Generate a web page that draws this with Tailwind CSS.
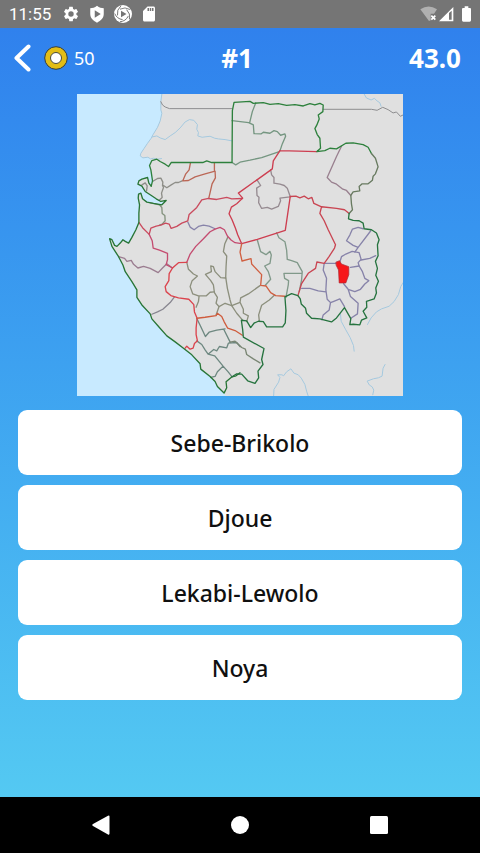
<!DOCTYPE html>
<html lang="en">
<head>
  <meta charset="UTF-8">
  <meta name="viewport" content="width=device-width, initial-scale=1.0">
  <title>Map Quiz</title>
  <script src="https://cdn.jsdelivr.net/npm/@tailwindcss/browser@4"></script>
</head>
<body class="min-h-screen flex flex-col bg-black font-['Noto_Sans','Open_Sans',sans-serif]">

  <!-- Status bar -->
  <div class="h-7 shrink-0 flex items-center justify-between bg-[#757575] text-white pl-[9px] pr-2">
    <div class="flex items-center">
      <span class="w-[53px] text-[17px] leading-7 font-['Roboto',sans-serif]">11:55</span>
      <svg class="size-[18px]" viewBox="0 0 24 24" fill="currentColor" aria-hidden="true">
        <path d="M19.14 12.94c.04-.3.06-.61.06-.94s-.02-.64-.07-.94l2.03-1.58a.49.49 0 0 0 .12-.61l-1.92-3.32a.49.49 0 0 0-.59-.22l-2.39.96a7 7 0 0 0-1.62-.94l-.36-2.54a.48.48 0 0 0-.48-.41h-3.84c-.24 0-.43.17-.47.41l-.36 2.54c-.59.24-1.13.57-1.62.94l-2.39-.96a.48.48 0 0 0-.59.22L2.74 8.87c-.12.21-.08.47.12.61l2.03 1.58a7.3 7.3 0 0 0 0 1.88l-2.03 1.58a.49.49 0 0 0-.12.61l1.92 3.32c.12.22.37.29.59.22l2.39-.96c.5.38 1.03.7 1.62.94l.36 2.54c.05.24.24.41.48.41h3.84c.24 0 .44-.17.47-.41l.36-2.54c.59-.24 1.13-.56 1.62-.94l2.39.96c.22.08.47 0 .59-.22l1.92-3.32a.48.48 0 0 0-.12-.61zM12 15.6a3.6 3.6 0 1 1 0-7.2 3.6 3.6 0 0 1 0 7.2z"/>
      </svg>
      <svg class="ml-2 size-[18px]" viewBox="0 0 24 24" fill="currentColor" aria-hidden="true">
        <path fill-rule="evenodd" d="M12 1C9 3.4 6 4.2 3 4.4V12c0 5 3.6 9 9 11.500C17.400 21 21 17 21 12V4.400C18 4.200 15 3.400 12 1zM9 7l8 5-8 5z"/>
      </svg>
      <svg class="ml-2 size-[18px]" viewBox="0 0 18 18" aria-hidden="true">
        <circle cx="9" cy="9" r="9" fill="#fff"/>
        <g fill="none" stroke="#757575" stroke-width=".9">
          <path d="M6 4.200Q11 1.500 16 4.500"/>
          <path d="M6 4.200Q11 1.500 16 4.500" transform="rotate(72 9 9)"/>
          <path d="M6 4.200Q11 1.500 16 4.500" transform="rotate(144 9 9)"/>
          <path d="M6 4.200Q11 1.500 16 4.500" transform="rotate(216 9 9)"/>
          <path d="M6 4.200Q11 1.500 16 4.500" transform="rotate(288 9 9)"/>
        </g>
        <path d="M7 5.800v6.400l5.500-3.200z" fill="#757575"/>
      </svg>
      <svg class="ml-2 size-[18px]" viewBox="0 0 24 24" fill="currentColor" aria-hidden="true">
        <path d="M18 2h-8L4 8v12c0 1.100.9 2 2 2h12c1.100 0 2-.9 2-2V4c0-1.100-.9-2-2-2zm-6 6h-2V4h2v4zm3 0h-2V4h2v4zm3 0h-2V4h2v4z"/>
      </svg>
    </div>
    <div class="flex items-center">
      <!-- Wi-Fi without internet -->
      <svg class="w-[18px] h-4" viewBox="0 0 54 48" aria-hidden="true">
        <path d="M1 10Q26-7 51 10L42 23H32v20L27 45z" fill="#b0b0b0"/>
        <path d="M34 29l12 12m0-12L34 41" stroke="#fff" stroke-width="5"/>
      </svg>
      <svg class="ml-px w-[15px] h-4" viewBox="0 0 45 48" aria-hidden="true">
        <path fill-rule="evenodd" d="M0 46L43 3v43zM30 21v20h8V14z" fill="#fff"/>
      </svg>
      <svg class="ml-[7px] w-[11px] h-4" viewBox="0 0 33 48" fill="#fff" aria-hidden="true">
        <path d="M11 1h11v5h5q3 0 3 3v34q0 4-4 4H7q-4 0-4-4V9q0-3 3-3h5z"/>
      </svg>
    </div>
  </div>

  <main class="flex-1 flex flex-col bg-linear-to-b from-[#3081ed] to-[#54c9f2] pb-4">
    <!-- Header -->
    <header class="h-15 grid grid-cols-3 items-center pl-[13px] pr-[19px] text-white">
      <div class="flex items-center">
        <button type="button" aria-label="Back" class="w-[18px]">
          <svg class="w-[18px] h-7" viewBox="0 0 18 28" fill="none" stroke="#fff" stroke-width="4" stroke-linecap="round" stroke-linejoin="round">
            <path d="M15.500 2.500L3.500 14l12 11.500"/>
          </svg>
        </button>
        <svg class="ml-[13px] size-6" viewBox="0 0 24 24" aria-hidden="true">
          <circle cx="12" cy="12" r="11.300" fill="#e2bd16" stroke="#303c45" stroke-width="1"/>
          <circle cx="12" cy="12" r="5.500" fill="#fff" stroke="#4a4b3c" stroke-width="1"/>
        </svg>
        <span class="ml-[6px] text-[18px] leading-6">50</span>
      </div>
      <h1 class="text-center text-[26px] leading-8 font-bold">#1</h1>
      <div class="text-right text-[26px] leading-8 font-bold">43.0</div>
    </header>

    <!-- Map -->
    <svg class="mt-[6px] w-[68%] mx-auto shrink-0" viewBox="20 17 981 909" role="img" aria-label="Map of Gabon with one department highlighted" fill="none" stroke-width="4" stroke-linejoin="round" stroke-linecap="round">
      <rect x="20" y="17" width="981" height="909" fill="#c8eaff"/>
      <path fill="#e0e0e0" d="M275 15L272 40V65L275 75 270 98 262 117 248 140 243 150 232 165 222 180 212 195 210 203 218 209 233 207 241 212 242 218 238 232 242 245 246 262 247 280 243 294 236 285 232 268 215 273 206 278 203 288 215 294 225 310 240 320 258 332 272 340 288 337 275 350 250 346 230 342 217 332 212 315 205 318 204 330 208 350 206 375V403L197 425 185 448 175 465 165 460 158 455 150 465 140 475 133 472 125 455 118 452 125 475 145 506 158 531 165 551 185 581 200 606V628L215 651 240 678 245 693 265 716 290 744 315 762 340 781 365 801 390 828 392 844 420 866 435 881 442 896 462 916 470 930H1003V15z"/>

      <!-- rivers -->
      <g stroke="#a5c9df" stroke-width="3">
        <path d="M275 17L272 40V65L275 75 270 98 262 117 248 140 243 150 232 165 222 180 212 195 210 203 218 209 233 207 241 212 250 210 262 213 274 211"/>
        <path d="M246 146L260 143 270 149 285 154 300 143 315 133 330 119 345 101 358 94 371 96 382 109 380 123 385 133 383 143 396 147 420 144 434 150 445 152 465 154 486 158"/>
        <path d="M883 17L890 29 904 35 914 30 922 38 930 43 934 54"/>
        <path d="M1001 583L993 596 986 620 973 641 958 655 935 663 920 672 904 690 893 710"/>
        <path d="M812 678L814 700 828 726 841 749 851 773 853 790"/>
        <path d="M611 925L612 905 626 883 630 869 623 861 636 861 641 864 650 852 663 843 672 856 685 861 694 871 705 890 710 910 715 925"/>
        <path d="M946 830L940 841 937 865 926 870 911 873 892 880 899 892 907 897 912 907 909 921"/>
      </g>

      <!-- neighbouring countries -->
      <path stroke="#8d8d8f" stroke-width="3" d="M272 40L277 50 285 56 298 61H486M760 63H905L922 66 939 57 955 64 970 74 980 71 992 84 1000 80"/>

      <!-- department borders -->
      <g stroke="#8e8e88">
        <path d="M247 280L262 271 272 270 278 282 277 292 280 298 274 315 276 328 267 336M280 292L290 299 302 291 315 283 325 283 336 278"/>
        <path d="M215 290L225 284 231 293 229 308"/>
        <path stroke="#82917c" d="M240 344L268 350 275 358 276 376 284 382 285 398 276 408 268 411"/>
        <path stroke="#759681" d="M486 97L536 103 550 110 552 136 573 137 580 132 600 135 612 127 622 130 632 141 645 137 647 144 637 167 630 188M557 44L547 70 539 103"/>
        <path stroke="#759681" d="M486 223L497 230 510 222 540 216 575 208 628 190"/>
        <path stroke="#968b91" d="M602 245L605 260 612 268 612 285 630 288 643 292 652 300 660 323M561 275L572 292 560 300 561 322 567 327 566 344 575 361 592 358 605 363 625 355 632 338 630 330 660 326"/>
        <path stroke="#99808f" d="M815 174L800 205 772 268 785 282 800 288 819 303 830 307 843 322"/>
        <path stroke="#6e8881" d="M380 692L390 712 406 746 417 733 440 727 465 723M461 724L480 762M380 759L395 770 405 786 414 799 431 785 440 789 448 776 470 780 475 766 500 764 510 776M414 799L434 804 459 835 475 853 486 867M459 835L442 852 435 866 422 869"/>
      </g>

      <!-- central departments -->
      <g stroke="#8c8f7d" transform="translate(330 396)">
        <path d="M143 52L134 72 130 95 140 108 138 140 137 172 142 205 150 240 155 257 170 280 187 300"/>
        <path d="M137 174L122 173 105 155 100 140 92 138 94 155 76 163 92 182 100 195 103 218 112 232 108 250 117 260"/>
        <path d="M20 127L25 148 40 162 52 168 36 182 30 200 38 222 55 228 78 228 90 217 102 216M57 228L55 245 48 262"/>
        <path d="M108 285L117 260 135 250 155 257 180 247 182 234 205 222 240 197M180 247L190 268 190 280 205 288 200 305"/>
        <path d="M284 225L268 240 245 256 236 285 238 303"/>
        <path stroke="#81998a" d="M232 60L242 95 258 104 270 94 274 105 270 130 254 138 265 155 272 178 256 196"/>
        <path stroke="#81998a" d="M290 38L297 53 315 65 320 90 322 118 335 122 352 128 367 155 365 180 358 215M367 160H312L314 175 326 182 325 195 318 232"/>
      </g>

      <!-- western departments -->
      <path stroke="#8783a9" d="M353 402L360 417 372 425 385 415 400 411 417 414 435 422"/>
      <path stroke="#9b7d90" d="M145 506L163 511 170 520 183 517 190 529 203 540 220 535 240 541 264 554 277 540 290 527 306 539"/>
      <path stroke="#888690" d="M245 679L262 672 278 664 300 644 313 627"/>

      <!-- eastern departments -->
      <g stroke="#8783a9" transform="translate(660 366)">
        <path d="M103 160H144M150 156L155 140 168 132 187 124 208 128 214 148 205 158 208 168 182 172"/>
        <path d="M220 56L205 52 188 57 180 75 170 92 190 106 205 112 243 62M205 112L195 126M214 150L240 145 258 137"/>
        <path d="M208 168L218 185 225 205 237 212 225 222 212 238 195 245 175 238 162 222 160 216M175 238L182 260 205 280 203 312 183 325"/>
        <path d="M103 160L100 180 110 205 108 240 112 268 122 278 130 275 150 267 164 290M108 246L85 243 60 235 35 235M122 278L118 300 100 315 96 330"/>
      </g>

      <!-- province borders -->
      <g stroke="#ca4b5e">
        <path stroke="#bb6756" d="M361 224L357 245 347 257 338 278 355 277 375 266 405 257 435 249 436 269 426 287 416 331M433 224V249"/>
        <path d="M206 403L217 419 237 439 242 420 258 414 272 411 286 405 297 408 303 421 320 415 335 405 353 398 357 379 380 358 395 335 415 331 440 334 470 328 485 332 517 331"/>
        <path stroke="#cd3e50" d="M630 187L610 218 607 242 561 275 505 315 518 330 500 347 484 357 477 377 486 395 496 420 503 440 515 467 562 454 646 427 661 325M630 187L741 190"/>
        <path stroke="#c44c70" d="M237 439L246 458 249 480 268 486 292 496 292 515 288 530 307 540M350 523L360 498 377 475 400 452 420 431 435 423 450 418 463 425 472 444 483 456 495 464 515 467"/>
        <path stroke="#db444d" d="M350 523L325 524 307 540 297 557 296 578 285 596 288 611 302 623 325 630 356 634 371 650 373 672 381 691 378 720 378 740 382 759 373 767 369 781 360 784 350 775 345 781"/>
        <path stroke="#cf5c3d" d="M381 691L405 688 438 683 442 676 455 686 462 701 473 721 495 728 517 742"/>
        <path stroke="#d06042" d="M515 467L510 492 516 519 543 512 545 528 575 560 572 592 588 594 602 614 617 623 645 625"/>
        <path stroke="#c94552" d="M661 325L678 324 690 329 703 324 715 332 726 328 732 346 755 356 800 361 824 365 838 376M755 356L750 376 763 398 775 425 797 470 794 480 778 505 763 526 741 522 737 541 715 556 695 587 684 623"/>
      </g>

      <!-- national border -->
      <g stroke="#2d803c">
        <path stroke="#287536" d="M243 294L236 285 232 268 215 273 206 278 203 288 215 294 225 310 240 320 258 332 272 340 288 337 275 350 250 346 230 342 217 332 212 315 205 318 204 330 208 350 206 375V403L197 425 185 448 175 465 165 460 158 455 150 465 140 475 133 472 125 455 118 452 125 475 145 506 158 531 165 551 185 581 200 606V628L215 651 240 678 245 693 265 716 290 744 315 762 340 781 365 801 390 828 392 844 420 866 435 881 442 896 462 916 470 900 468 882 486 867 498 864 510 855"/>
        <path d="M243 294L247 278 242 245 238 232 245 217 260 213 270 220 285 228 295 235 303 223H398L410 218 425 223H486L487 67 492 42 540 39 550 45 580 43 600 48 625 46 650 51 675 49 700 53 720 46 735 50 750 45 760 50 759 70 745 80 748 92 741 110 735 121 742 139 750 150 752 180 741 190 765 187 780 180 800 182 828 165 850 164 880 169 895 177 905 196"/>
        <path stroke="#687a60" d="M905 196L917 210 925 236 917 257 910 264 908 276 895 287 877 287 868 295 870 308 850 311 843 322 845 348 848 365 838 376"/>
        <path stroke="#26733f" d="M838 376L836 392 850 397 868 398 880 405 883 422 905 425 920 435 928 455 923 470 925 503 917 520 923 541 918 562 926 580 918 600 920 615 913 633 890 640 891 658 880 670 891 690 875 697 870 711 850 709 840 710 843 692 824 659 800 690 785 702 750 693 725 691 710 676 707 661 694 648 691 633 684 623 665 617 645 627 648 668 646 705 638 717H590L580 701 565 700 552 706 542 719 530 699 514 697 518 726 520 748 582 782 575 815 579 830 564 850 566 870 555 887 533 879 515 859 500 858 486 867"/>
        <path stroke="#7a8674" d="M480 763L495 760 515 779 526 784 530 800 550 813 570 825"/>
      </g>

      <!-- highlighted department -->
      <path fill="#f7171a" stroke="#a72b35" stroke-width="2" d="M799 522L809 518 815 528 837 536 837 560 828 585H808L806 546 799 532z"/>
    </svg>

    <!-- Answers -->
    <div class="mt-[14px] px-[18px] flex flex-col gap-[10px] text-[23px] font-medium text-[#101010]">
      <button type="button" class="h-[65px] rounded-[9px] bg-white">Sebe-Brikolo</button>
      <button type="button" class="h-[65px] rounded-[9px] bg-white">Djoue</button>
      <button type="button" class="h-[65px] rounded-[9px] bg-white">Lekabi-Lewolo</button>
      <button type="button" class="h-[65px] rounded-[9px] bg-white">Noya</button>
    </div>
  </main>

  <!-- System navigation -->
  <nav class="h-14 shrink-0 grid grid-cols-3 items-center justify-items-center px-[31px] bg-black">
    <button type="button" aria-label="Back">
      <svg class="size-5" viewBox="0 0 20 20" fill="#fff"><path d="M17 .8q1.500-.8 1.500.8v17q0 1.600-1.500.8L2 11q-1.500-1 0-2z"/></svg>
    </button>
    <button type="button" aria-label="Home">
      <svg class="size-5" viewBox="0 0 20 20" fill="#fff"><circle cx="10" cy="10" r="9"/></svg>
    </button>
    <button type="button" aria-label="Overview">
      <svg class="size-5" viewBox="0 0 20 20" fill="#fff"><rect x="1" y="1" width="18" height="18" rx="1.500"/></svg>
    </button>
  </nav>
</body>
</html>
